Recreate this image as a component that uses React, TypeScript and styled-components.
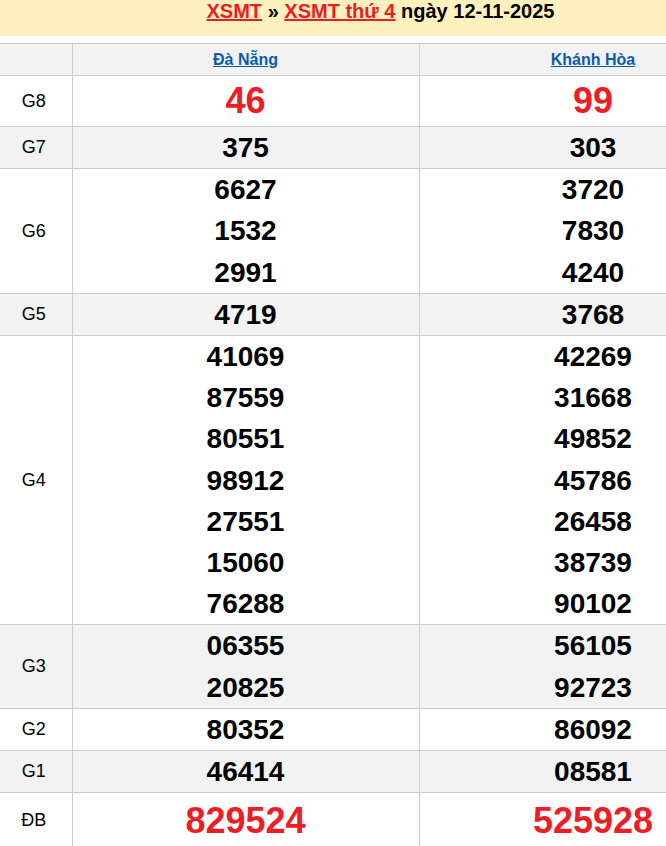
import React from "react";
import styled, { createGlobalStyle } from "styled-components";

const GlobalStyle = createGlobalStyle`
  html, body { margin: 0; padding: 0; background: #ffffff; }
  body { font-family: "Liberation Sans", Arial, sans-serif; color: #000; }
`;

const Page = styled.div`
  width: 767px;
`;

const TitleBar = styled.h2`
  margin: 0 0 7px;
  padding: 0 6px 0 0;
  height: 36px;
  background: #fff1bf;
  font-size: 20px;
  line-height: 23px;
  font-weight: bold;
  text-align: center;
  color: #000;
`;

const TitleLink = styled.a`
  color: #ee1c25;
  text-decoration: underline;
`;

const Table = styled.table`
  width: 767px;
  border-collapse: collapse;
  table-layout: fixed;
`;

const Row = styled.tr<{ $shade?: boolean }>`
  background: ${(p) => (p.$shade ? "#f2f2f2" : "#ffffff")};
`;

const HeadCell = styled.th<{ $edge?: boolean }>`
  border: 1px solid #cccccc;
  border-left: ${(p) => (p.$edge ? "none" : "1px solid #cccccc")};
  height: 31px;
  padding: 0;
  font-size: 16px;
  font-weight: bold;
  text-align: center;
  vertical-align: middle;
`;

const ProvinceLink = styled.a`
  color: #0b5ba9;
  text-decoration: underline;
`;

const LabelCell = styled.td`
  border: 1px solid #cccccc;
  border-left: none;
  padding: 0 4px 0 0;
  font-size: 18px;
  text-align: center;
  vertical-align: middle;
`;

const ResultCell = styled.td`
  border: 1px solid #cccccc;
  padding: 0;
  text-align: center;
  vertical-align: middle;
`;

const Num = styled.div<{ $big?: boolean; $tall?: boolean }>`
  font-weight: bold;
  font-size: ${(p) => (p.$big ? "36px" : "28px")};
  line-height: ${(p) => (p.$tall ? "55px" : p.$big ? "50px" : "41.2px")};
  color: ${(p) => (p.$big ? "#ee1c25" : "#000")};
`;

type Prize = { label: string; a: string[]; b: string[]; big?: boolean; tall?: boolean };

const prizes: Prize[] = [
  { label: "G8", a: ["46"], b: ["99"], big: true },
  { label: "G7", a: ["375"], b: ["303"] },
  { label: "G6", a: ["6627", "1532", "2991"], b: ["3720", "7830", "4240"] },
  { label: "G5", a: ["4719"], b: ["3768"] },
  {
    label: "G4",
    a: ["41069", "87559", "80551", "98912", "27551", "15060", "76288"],
    b: ["42269", "31668", "49852", "45786", "26458", "38739", "90102"],
  },
  { label: "G3", a: ["06355", "20825"], b: ["56105", "92723"] },
  { label: "G2", a: ["80352"], b: ["86092"] },
  { label: "G1", a: ["46414"], b: ["08581"] },
  { label: "ĐB", a: ["829524"], b: ["525928"], big: true, tall: true },
];

export default function App() {
  return (
    <Page>
      <GlobalStyle />
      <TitleBar>
        <TitleLink href="#">XSMT</TitleLink> » <TitleLink href="#">XSMT thứ 4</TitleLink> ngày 12-11-2025
      </TitleBar>
      <Table>
        <colgroup>
          <col style={{ width: 72 }} />
          <col style={{ width: 347 }} />
          <col style={{ width: 348 }} />
        </colgroup>
        <thead>
          <Row $shade>
            <HeadCell $edge />
            <HeadCell>
              <ProvinceLink href="#">Đà Nẵng</ProvinceLink>
            </HeadCell>
            <HeadCell>
              <ProvinceLink href="#">Khánh Hòa</ProvinceLink>
            </HeadCell>
          </Row>
        </thead>
        <tbody>
          {prizes.map((p, i) => (
            <Row key={p.label} $shade={i % 2 === 1}>
              <LabelCell>{p.label}</LabelCell>
              <ResultCell>
                {p.a.map((n, j) => (
                  <Num key={j} $big={p.big} $tall={p.tall}>{n}</Num>
                ))}
              </ResultCell>
              <ResultCell>
                {p.b.map((n, j) => (
                  <Num key={j} $big={p.big} $tall={p.tall}>{n}</Num>
                ))}
              </ResultCell>
            </Row>
          ))}
        </tbody>
      </Table>
    </Page>
  );
}
